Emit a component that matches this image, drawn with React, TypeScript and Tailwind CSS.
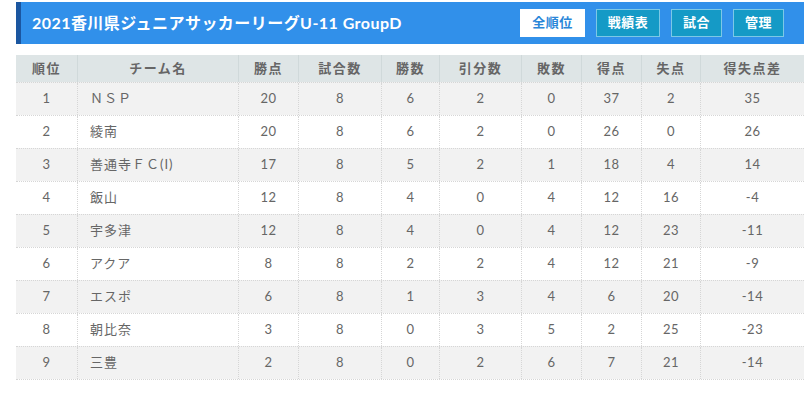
import React from "react";

const cols = [
  { label: "順位", w: 61 },
  { label: "チーム名", w: 161 },
  { label: "勝点", w: 60 },
  { label: "試合数", w: 83 },
  { label: "勝数", w: 58 },
  { label: "引分数", w: 82 },
  { label: "敗数", w: 60 },
  { label: "得点", w: 60 },
  { label: "失点", w: 59 },
  { label: "得失点差", w: 104 },
];

const rows: (string | number)[][] = [
  [1, "ＮＳＰ", 20, 8, 6, 2, 0, 37, 2, 35],
  [2, "綾南", 20, 8, 6, 2, 0, 26, 0, 26],
  [3, "善通寺ＦＣ(I)", 17, 8, 5, 2, 1, 18, 4, 14],
  [4, "飯山", 12, 8, 4, 0, 4, 12, 16, -4],
  [5, "宇多津", 12, 8, 4, 0, 4, 12, 23, -11],
  [6, "アクア", 8, 8, 2, 2, 4, 12, 21, -9],
  [7, "エスポ", 6, 8, 1, 3, 4, 6, 20, -14],
  [8, "朝比奈", 3, 8, 0, 3, 5, 2, 25, -23],
  [9, "三豊", 2, 8, 0, 2, 6, 7, 21, -14],
];

const font = { fontFamily: 'Lato, "Noto Sans CJK JP", sans-serif' };

export default function App() {
  return (
    <div className="w-[811px] h-[394px] bg-white pt-[2px] pl-4" style={font}>
      <div className="w-[788px] h-[42px] bg-[#3190ea] border-l-[5px] border-[#1b56a0] flex items-center justify-between pl-[11px] pr-5">
        <div className="text-white font-bold text-[16px] tracking-[0.45px]">
          2021香川県ジュニアサッカーリーグU-11 GroupD
        </div>
        <div className="flex gap-[11px]">
          <div className="w-[65px] h-[28px] bg-white text-[#2a86d8] font-bold text-[13px] tracking-[0.5px] flex items-center justify-center">全順位</div>
          <div className="w-[64px] h-[28px] bg-[#159ac6] border border-[#7cc8e6] text-white font-bold text-[13px] tracking-[0.5px] flex items-center justify-center">戦績表</div>
          <div className="w-[51px] h-[28px] bg-[#159ac6] border border-[#7cc8e6] text-white font-bold text-[13px] tracking-[0.5px] flex items-center justify-center">試合</div>
          <div className="w-[51px] h-[28px] bg-[#159ac6] border border-[#7cc8e6] text-white font-bold text-[13px] tracking-[0.5px] flex items-center justify-center">管理</div>
        </div>
      </div>
      <div className="mt-[11px] w-[788px] border-b border-dotted border-[#d6d6d6]">
        <div className="flex h-[27px] bg-[#dee5e6]">
          {cols.map((c, i) => (
            <div
              key={i}
              style={{ width: c.w }}
              className={`flex items-center justify-center text-[13px] font-bold text-[#666] tracking-[1.5px] ${i > 0 ? "border-l border-[#d0d9da]" : ""}`}
            >
              {c.label}
            </div>
          ))}
        </div>
        {rows.map((r, ri) => (
          <div
            key={ri}
            className={`flex h-[33px] border-t border-dotted border-[#d6d6d6] ${ri % 2 === 0 ? "bg-[#f2f2f2]" : "bg-white"}`}
          >
            {r.map((v, ci) => (
              <div
                key={ci}
                style={{ width: cols[ci].w }}
                className={`flex items-center text-[13px] text-[#666] ${ci === 1 ? "justify-start pl-3 tracking-[1px]" : "justify-center tracking-[0.5px]"} ${ci > 0 ? "border-l border-dotted border-[#d6d6d6]" : ""}`}
              >
                {v}
              </div>
            ))}
          </div>
        ))}
      </div>
    </div>
  );
}
